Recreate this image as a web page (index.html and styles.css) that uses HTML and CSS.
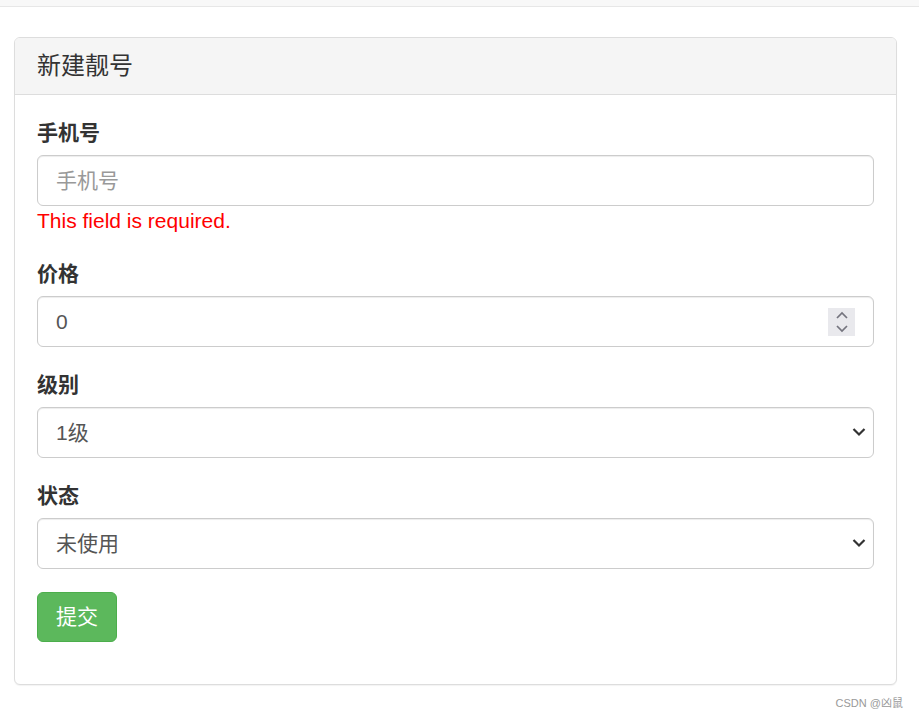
FILE: index.html
```html
<!DOCTYPE html>
<html lang="zh">
<head>
<meta charset="utf-8">
<title>新建靓号</title>
<link rel="stylesheet" href="styles.css">
</head>
<body>
<div class="navbar"></div>
<div class="panel">
  <div class="panel-heading">
    <h3 class="panel-title">新建靓号</h3>
  </div>
  <div class="panel-body">
    <form class="form">
      <div class="form-group">
        <label class="label">手机号</label>
        <input class="form-control" type="text" placeholder="手机号">
        <div class="error">This field is required.</div>
      </div>
      <div class="form-group">
        <label class="label">价格</label>
        <div class="control-wrap">
          <input class="form-control" type="text" value="0">
          <span class="spinner">
            <svg width="12" height="22" viewBox="0 0 12 22"><path d="M1 7 L6 2 L11 7" fill="none" stroke="#74747e" stroke-width="1.7"/><path d="M1 15 L6 20 L11 15" fill="none" stroke="#74747e" stroke-width="1.7"/></svg>
          </span>
        </div>
      </div>
      <div class="form-group">
        <label class="label">级别</label>
        <div class="control-wrap">
          <select class="form-control select"><option>1级</option></select>
          <span class="caret"><svg width="14" height="10" viewBox="0 0 14 10"><path d="M1.5 2 L7 7.5 L12.5 2" fill="none" stroke="#333" stroke-width="2.2"/></svg></span>
        </div>
      </div>
      <div class="form-group">
        <label class="label">状态</label>
        <div class="control-wrap">
          <select class="form-control select"><option>未使用</option></select>
          <span class="caret"><svg width="14" height="10" viewBox="0 0 14 10"><path d="M1.5 2 L7 7.5 L12.5 2" fill="none" stroke="#333" stroke-width="2.2"/></svg></span>
        </div>
      </div>
      <button type="button" class="btn">提交</button>
    </form>
  </div>
</div>
<div class="watermark">CSDN @凶鼠</div>
</body>
</html>
```
FILE: styles.css
```css
* { box-sizing: border-box; }
html, body { margin: 0; padding: 0; background: #fff; }
body {
  font-family: "Liberation Sans", "Noto Sans CJK SC", sans-serif;
  font-size: 21px;
  line-height: 30px;
  color: #333;
  position: relative;
  min-height: 718px;
}
.navbar {
  height: 7px;
  background: #f8f8f8;
  border-bottom: 1px solid #e7e7e7;
  margin-bottom: 30px;
}
.panel {
  margin: 0 22px 0 14px;
  border: 1px solid #ddd;
  border-radius: 6px;
  background: #fff;
  box-shadow: 0 1px 1px rgba(0,0,0,.05);
}
.panel-heading {
  background: #f5f5f5;
  border-bottom: 1px solid #ddd;
  border-radius: 5px 5px 0 0;
  padding: 15px 22px;
  height: 57px;
}
.panel-title {
  margin: 0;
  font-size: 24px;
  line-height: 26px;
  font-weight: normal;
  color: #333;
}
.panel-body {
  padding: 22.5px 22px 42px;
}
.form-group { margin-bottom: 22.5px; }
.label {
  display: block;
  font-weight: bold;
  margin-bottom: 7.5px;
}
.form-control {
  display: block;
  width: 100%;
  height: 51px;
  padding: 9px 18px;
  font-family: inherit;
  font-size: 21px;
  line-height: 30px;
  color: #555;
  background: #fff;
  border: 1px solid #ccc;
  border-radius: 6px;
  box-shadow: inset 0 1px 1px rgba(0,0,0,.075);
  outline: none;
}
.form-control::placeholder { color: #999; }
.select { appearance: none; -webkit-appearance: none; padding-right: 40px; }
.error { color: #f00; }
.control-wrap { position: relative; }
.spinner {
  position: absolute;
  right: 19px;
  top: 12px;
  width: 27px;
  height: 28px;
  background: #e9e9ed;
  display: flex;
  align-items: center;
  justify-content: center;
}
.spinner svg { display: block; }
.caret {
  position: absolute;
  right: 8px;
  top: 20px;
  display: flex;
}
.caret svg { display: block; }
.btn {
  display: block;
  height: 50px;
  padding: 9px 18px;
  font-family: inherit;
  font-size: 21px;
  line-height: 30px;
  color: #fff;
  background: #5cb85c;
  border: 1px solid #4cae4c;
  border-radius: 6px;
}
.watermark {
  position: absolute;
  right: 16px;
  top: 695px;
  font-size: 11px;
  line-height: 16px;
  color: #999;
}
```
